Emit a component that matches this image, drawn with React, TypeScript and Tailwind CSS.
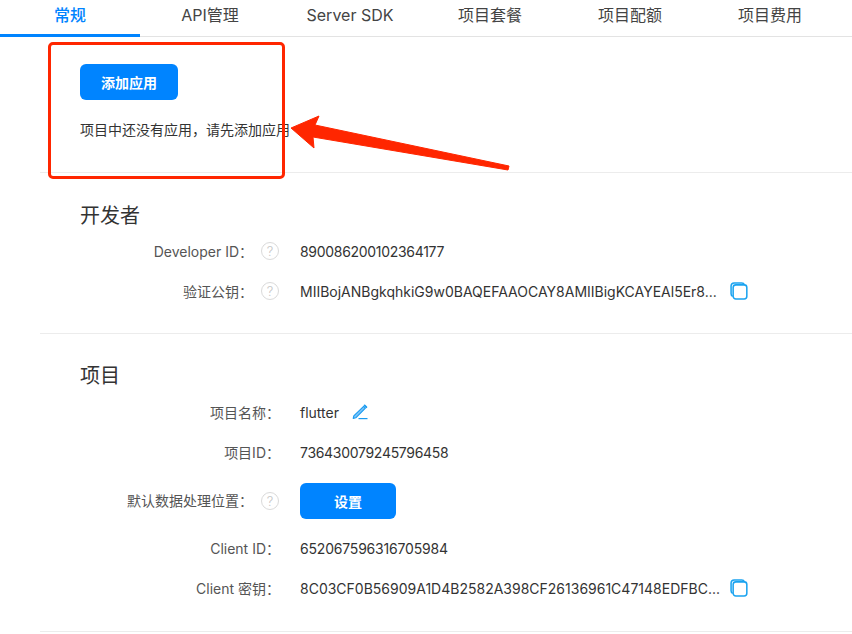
import React from 'react';

const tabs = ['常规', 'API管理', 'Server SDK', '项目套餐', '项目配额', '项目费用'];

const HelpIcon = () => (
    <span className="ml-[8px] mr-[21px] flex h-[18px] w-[18px] shrink-0 items-center justify-center rounded-full border-[1.5px] border-[#dadada] text-[13px] font-light leading-none text-[#c4c4c4]">?</span>
);

const CopyIcon = () => (
    <svg width="18" height="18" viewBox="0 0 20 20" fill="none" stroke="#1aa3f0" strokeWidth="1.7">
        <path d="M3 16 C1.8 15.5 1.2 14.5 1.2 13 V4.5 C1.2 2.4 2.4 1.2 4.5 1.2 H13 C14.5 1.2 15.6 1.9 16 3" />
        <rect x="3.5" y="3.2" width="15.2" height="15.6" rx="3" />
    </svg>
);

const EditIcon = () => (
    <svg width="16" height="16" viewBox="0 0 16 16" fill="none">
        <path d="M1.2 14.4 L1.8 11.8 L11.6 2.4 L13.4 4.2 L3.8 13.8 Z" fill="#7cc4f8" stroke="#1a9bf0" strokeWidth="1.1" strokeLinejoin="round" />
        <path d="M12.6 1.4 L14.4 3.2" stroke="#1a9bf0" strokeWidth="1.8" strokeLinecap="round" />
        <path d="M6.5 14.6 H15.5" stroke="#1a9bf0" strokeWidth="1.2" />
    </svg>
);

function Row({ label, help, children, className, labelClassName }: { label: string; help?: boolean; children: React.ReactNode; className?: string; labelClassName?: string }) {
    return (
        <div className={`flex items-center ${className || ''}`}>
            <div className={`${help ? 'w-[213px]' : 'mr-[20px] w-[240px]'} shrink-0 text-right text-[#555] ${labelClassName || ''}`}>{label}：</div>
            {help && <HelpIcon />}
            <div className="flex items-center text-[#333]">{children}</div>
        </div>
    );
}

export default function App() {
    return (
        <div className="relative h-[634px] w-[852px] overflow-hidden bg-white text-[14px] font-['Inter','Noto_Sans_CJK_SC',sans-serif]">
            <div className="flex h-[37px] border-b border-[#e3e3e3]">
                {tabs.map((t, i) => (
                    <div
                        key={t}
                        className={`-mb-px flex w-[140px] items-start justify-center pt-[5px] text-[16px] leading-[20px] ${i === 0 ? 'border-b-[3px] border-[#0084ff] font-medium text-[#0084ff]' : 'text-[#444]'}`}
                    >
                        {t}
                    </div>
                ))}
            </div>

            <div className="ml-[40px] h-[136px] border-b border-[#ececec] pl-[40px] pt-[27px]">
                <button className="h-[36px] w-[98px] rounded-[6px] bg-[#0084ff] text-[14px] font-bold text-white">添加应用</button>
                <p className="mt-[20px] leading-[20px] text-[#333]">项目中还没有应用，请先添加应用</p>
            </div>

            <div className="ml-[40px] h-[161px] border-b border-[#ececec]">
                <h2 className="ml-[40px] pt-[29px] text-[20px] leading-[28px] text-[#333]">开发者</h2>
                <Row label="Developer ID" help className="mt-[9px] h-[24px]"><span className="tracking-[-0.3px]">890086200102364177</span></Row>
                <Row label="验证公钥" help className="mt-[16px] h-[24px]">
                    <span className="w-[417px] whitespace-nowrap">MIIBojANBgkqhkiG9w0BAQEFAAOCAY8AMIIBigKCAYEAl5Er8...</span>
                    <span className="ml-[13px]"><CopyIcon /></span>
                </Row>
            </div>

            <div className="ml-[40px] h-[298px] border-b border-[#ececec]">
                <h2 className="ml-[40px] pt-[28px] text-[20px] leading-[28px] text-[#333]">项目</h2>
                <Row label="项目名称" className="mt-[10px] h-[24px]">
                    flutter
                    <span className="ml-[13px]"><EditIcon /></span>
                </Row>
                <Row label="项目ID" className="mt-[16px] h-[24px]"><span className="tracking-[-0.3px]">736430079245796458</span></Row>
                <Row label="默认数据处理位置" help labelClassName="mb-[2px]" className="mt-[19px] h-[36px]">
                    <button className="h-[36px] w-[96px] rounded-[6px] bg-[#0084ff] text-[14px] font-bold text-white">设置</button>
                </Row>
                <Row label="Client ID" className="mt-[17px] h-[24px]"><span className="tracking-[-0.2px]">652067596316705984</span></Row>
                <Row label="Client 密钥" className="mt-[16px] h-[24px]">
                    <span className="w-[417px] whitespace-nowrap">8C03CF0B56909A1D4B2582A398CF26136961C47148EDFBC...</span>
                    <span className="ml-[13px]"><CopyIcon /></span>
                </Row>
            </div>

            {/* red annotation drawn over the page */}
            <div className="absolute left-[48px] top-[42px] h-[137px] w-[237px] rounded-[5px] border-[3px] border-[#ff2600]" />
            <svg className="absolute left-0 top-0" width="852" height="634" fill="none">
                <path d="M291 128 L319 116 L315 125 L509 166 L508 170 L313 137 L314 148 Z" fill="#ff2600" stroke="#ff2600" strokeWidth="1" strokeLinejoin="round" />
            </svg>
        </div>
    );
}
